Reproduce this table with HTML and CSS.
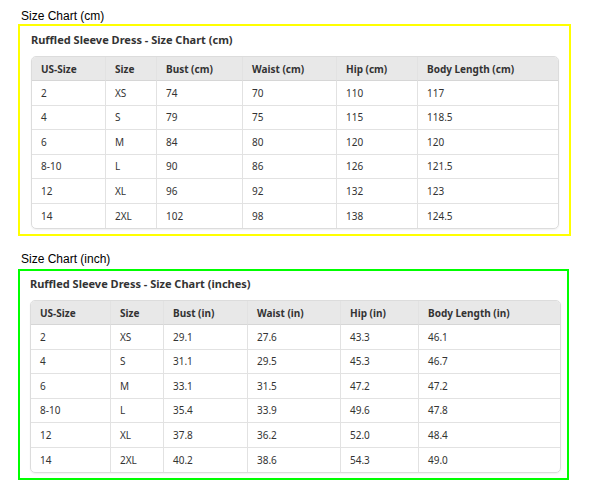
FILE: index.html
```html
<!DOCTYPE html>
<html>
<head>
<meta charset="utf-8">
<link rel="stylesheet" href="styles.css">
</head>
<body>
<div class="page">
  <section class="chart chart-cm">
    <div class="label">Size Chart (cm)</div>
    <div class="box box-yellow">
      <div class="title">Ruffled Sleeve Dress - Size Chart (cm)</div>
      <table class="sizes">
        <colgroup>
          <col style="width:74px"><col style="width:51px"><col style="width:86px"><col style="width:94px"><col style="width:81px"><col style="width:140px">
        </colgroup>
        <thead>
          <tr><th>US-Size</th><th>Size</th><th>Bust (cm)</th><th>Waist (cm)</th><th>Hip (cm)</th><th>Body Length (cm)</th></tr>
        </thead>
        <tbody>
          <tr><td>2</td><td>XS</td><td>74</td><td>70</td><td>110</td><td>117</td></tr>
          <tr><td>4</td><td>S</td><td>79</td><td>75</td><td>115</td><td>118.5</td></tr>
          <tr><td>6</td><td>M</td><td>84</td><td>80</td><td>120</td><td>120</td></tr>
          <tr><td>8-10</td><td>L</td><td>90</td><td>86</td><td>126</td><td>121.5</td></tr>
          <tr><td>12</td><td>XL</td><td>96</td><td>92</td><td>132</td><td>123</td></tr>
          <tr><td>14</td><td>2XL</td><td>102</td><td>98</td><td>138</td><td>124.5</td></tr>
        </tbody>
      </table>
    </div>
  </section>
  <section class="chart chart-in">
    <div class="label">Size Chart (inch)</div>
    <div class="box box-green">
      <div class="title">Ruffled Sleeve Dress - Size Chart (inches)</div>
      <table class="sizes">
        <colgroup>
          <col style="width:80px"><col style="width:53px"><col style="width:84px"><col style="width:93px"><col style="width:78px"><col style="width:141px">
        </colgroup>
        <thead>
          <tr><th>US-Size</th><th>Size</th><th>Bust (in)</th><th>Waist (in)</th><th>Hip (in)</th><th>Body Length (in)</th></tr>
        </thead>
        <tbody>
          <tr><td>2</td><td>XS</td><td>29.1</td><td>27.6</td><td>43.3</td><td>46.1</td></tr>
          <tr><td>4</td><td>S</td><td>31.1</td><td>29.5</td><td>45.3</td><td>46.7</td></tr>
          <tr><td>6</td><td>M</td><td>33.1</td><td>31.5</td><td>47.2</td><td>47.2</td></tr>
          <tr><td>8-10</td><td>L</td><td>35.4</td><td>33.9</td><td>49.6</td><td>47.8</td></tr>
          <tr><td>12</td><td>XL</td><td>37.8</td><td>36.2</td><td>52.0</td><td>48.4</td></tr>
          <tr><td>14</td><td>2XL</td><td>40.2</td><td>38.6</td><td>54.3</td><td>49.0</td></tr>
        </tbody>
      </table>
    </div>
  </section>
</div>
</body>
</html>
```

FILE: styles.css
```css
* { box-sizing: border-box; }
html, body { margin: 0; padding: 0; background: #fff; }
.page {
  padding: 9px 0 0 18px;
  font-family: "Liberation Sans", Arial, sans-serif;
}
.label {
  font-size: 12px;
  line-height: 14px;
  color: #000;
  padding-left: 3px;
}
.chart-cm .box { margin-top: 1px; width: 553px; padding: 5px 0 0 11px; height: 212px; }
.chart-in { margin-top: 16px; }
.chart-in .box { margin-top: 3px; width: 551px; padding: 4px 0 0 10px; height: 211px; }
.box { border: 2px solid; }
.box-yellow { border-color: #ffff00; }
.box-green { border-color: #00ff00; }
.title {
  font-family: "Noto Sans", "Open Sans", sans-serif;
  font-weight: 700;
  font-size: 11px;
  line-height: 17px;
  color: #333;
  margin-bottom: 8px;
}
.chart-in .title { margin-bottom: 8px; }
.sizes {
  font-family: "Noto Sans", "Open Sans", sans-serif;
  font-size: 10px;
  color: #333;
  border-collapse: separate;
  border-spacing: 0;
  table-layout: fixed;
  border: 1px solid #dcdcdc;
  border-radius: 5px;
  overflow: hidden;
  box-shadow: 0 1px 2px rgba(0,0,0,0.06);
}
.sizes th, .sizes td {
  text-align: left;
  padding: 0 0 0 9px;
  border-right: 1px solid #e2e2e2;
  border-bottom: 1px solid #e2e2e2;
  white-space: nowrap;
}
.sizes th:last-child, .sizes td:last-child { border-right: none; }
.sizes tbody tr:last-child td { border-bottom: none; }
.sizes th {
  background: #e8e8e8;
  font-weight: 700;
  height: 24px;
  border-bottom-color: #d6d6d6;
}
.sizes td { height: 24.5px; }
```
